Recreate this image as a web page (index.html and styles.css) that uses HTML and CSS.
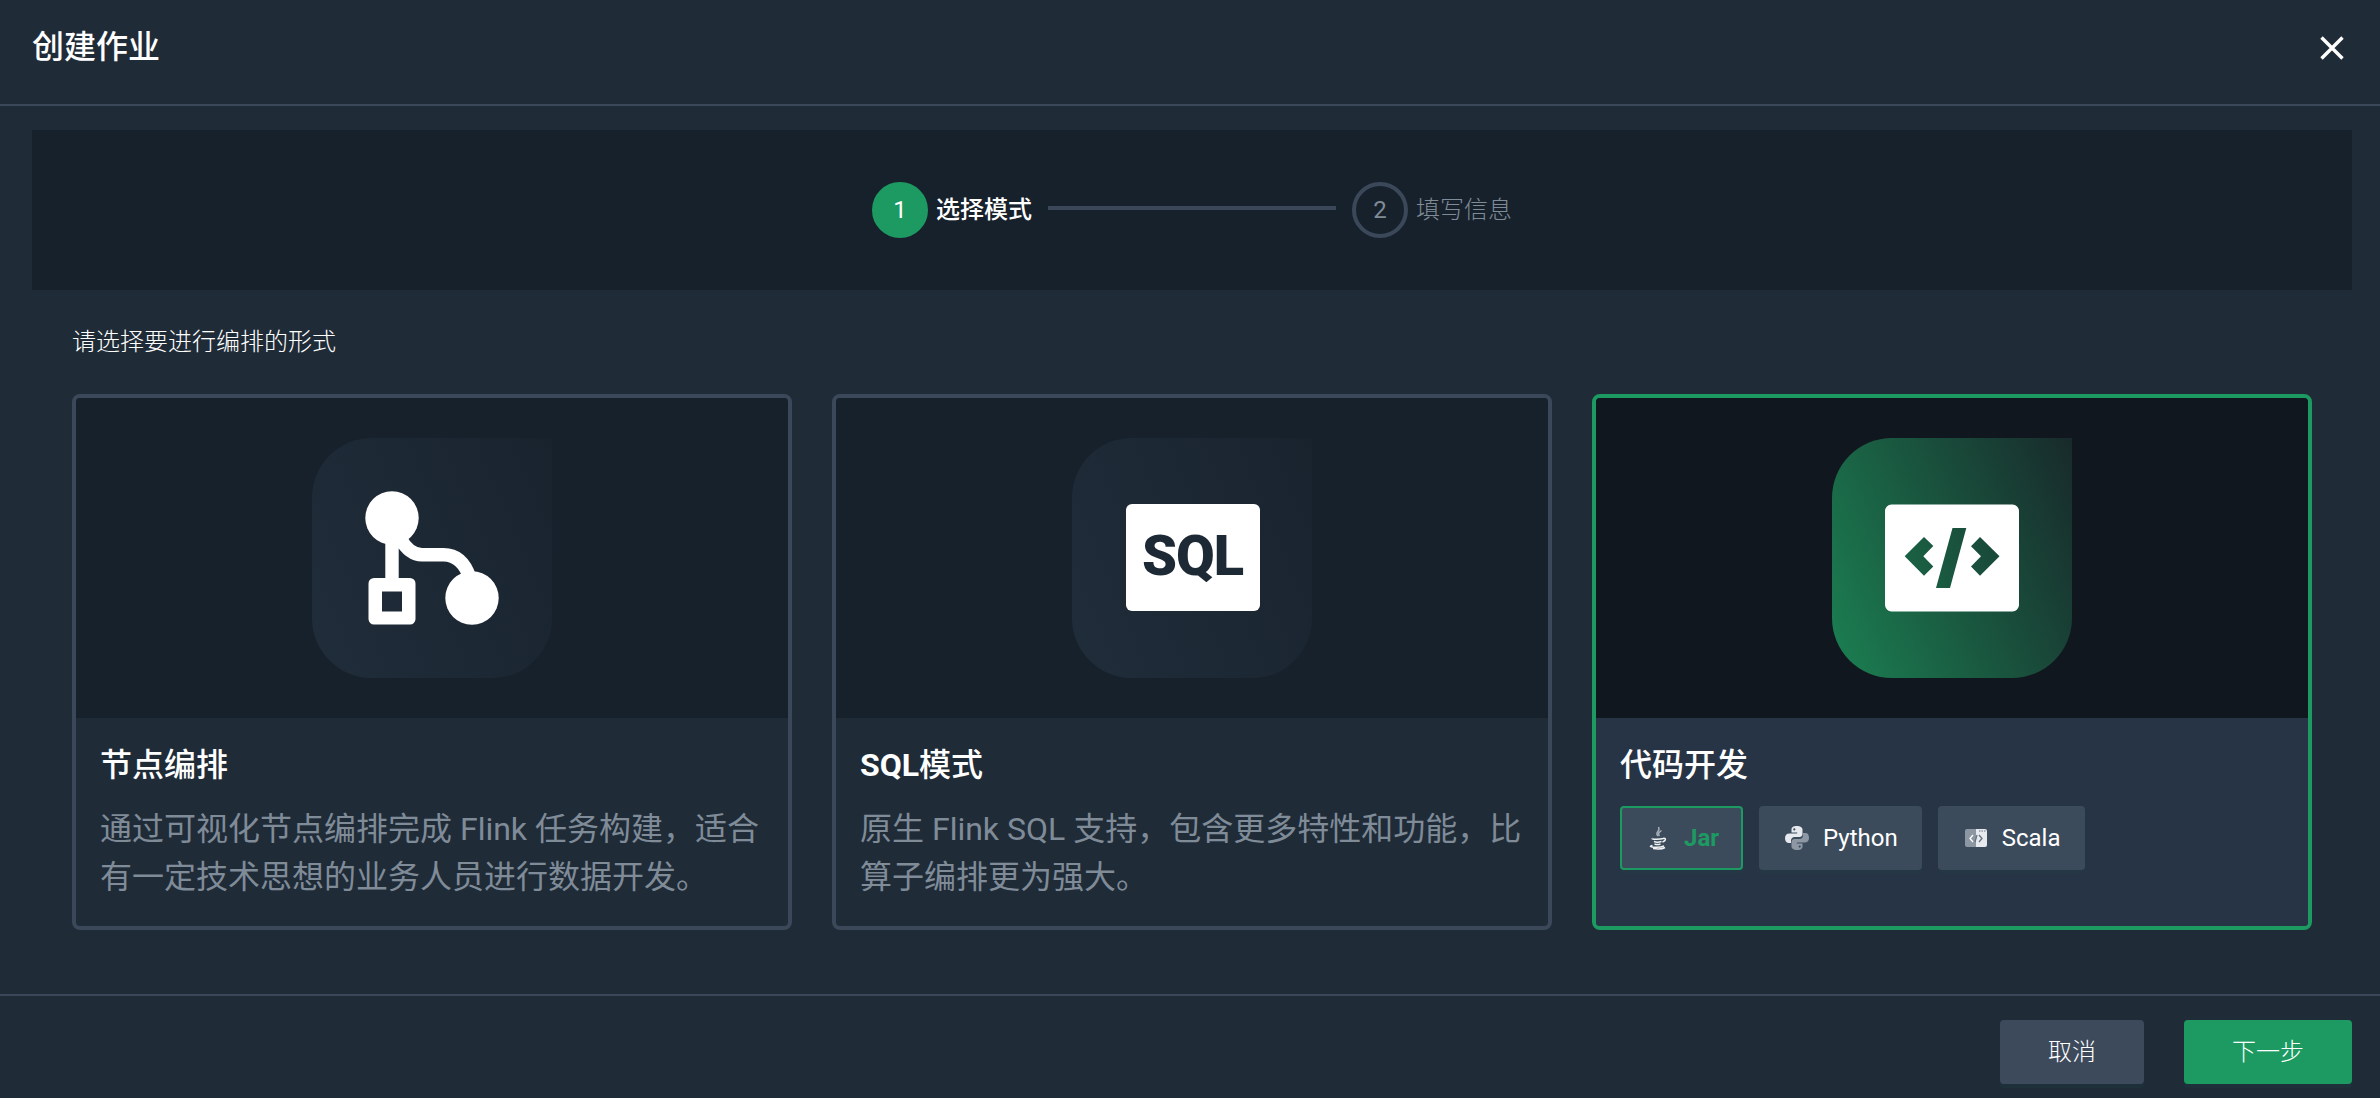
FILE: index.html
```html
<!DOCTYPE html>
<html lang="zh-CN">
<head>
<meta charset="utf-8">
<title>创建作业</title>
<link rel="stylesheet" href="styles.css">
</head>
<body>
<div class="modal">
  <header class="modal-header">
    <h1>创建作业</h1>
    <button class="close" aria-label="关闭"><svg width="24" height="24" viewBox="0 0 24 24"><path d="M1.500 1.500l21 21M22.500 1.500l-21 21" stroke="#fff" stroke-width="3.400" fill="none"/></svg></button>
  </header>
  <main class="modal-body">
    <div class="steps">
      <div class="step active"><span class="num">1</span><span>选择模式</span></div>
      <i class="line"></i>
      <div class="step"><span class="num">2</span><span class="light">填写信息</span></div>
    </div>
    <p class="prompt light">请选择要进行编排的形式</p>
    <div class="cards">
      <section class="card">
        <div class="preview"><div class="tile">
          <svg width="240" height="240" viewBox="0 0 240 240" fill="#fff">
            <circle cx="80" cy="80" r="26.700"/><circle cx="160" cy="160" r="26.700"/>
            <path fill-rule="evenodd" d="M62 140h36a5.500 5.500 0 0 1 5.500 5.500v35.500a5.500 5.500 0 0 1-5.500 5.500h-36a5.500 5.500 0 0 1-5.500-5.500v-35.500a5.500 5.500 0 0 1 5.500-5.500zM70 153.500v20h20v-20z"/>
            <path d="M80 95v50M88 100C94 111 101 116.700 110 116.700H131.500C144 116.700 153 125 158 140" fill="none" stroke="#fff" stroke-width="13.400"/>
          </svg>
        </div></div>
        <div class="info">
          <h2>节点编排</h2>
          <p>通过可视化节点编排完成 Flink 任务构建，适合有一定技术思想的业务人员进行数据开发。</p>
        </div>
      </section>
      <section class="card">
        <div class="preview"><div class="tile"><div class="sql">SQL</div></div></div>
        <div class="info">
          <h2><b>SQL</b>模式</h2>
          <p>原生 Flink SQL 支持，包含更多特性和功能，比算子编排更为强大。</p>
        </div>
      </section>
      <section class="card selected">
        <div class="preview"><div class="tile">
          <svg width="240" height="240" viewBox="0 0 240 240" fill="#fff">
            <path fill-rule="evenodd" d="M59.500 66.500h121a6.500 6.500 0 0 1 6.500 6.500v94a6.500 6.500 0 0 1-6.500 6.500h-121a6.500 6.500 0 0 1-6.500-6.500v-94a6.500 6.500 0 0 1 6.500-6.500zM120.500 90L104 150h14L134.300 90zM92 99L72.700 118.300 92 137.700l9.300-9.300L91.300 118.300l10-10.300zM148 99l-9 9.300 10 10-10 10.200 9 9.200 19.500-19.400z"/>
          </svg>
        </div></div>
        <div class="info">
          <h2>代码开发</h2>
          <div class="langs">
            <button class="lang on">
              <svg width="24" height="24" viewBox="0 0 24 24" fill="none" stroke="#f0f2f4" stroke-width="1.500"><path d="M12 10c-4-4 3-4 .5-9M13.500 10c-2-2.500-.5-3.500 2-5.500" stroke="#a4abb5"/><path d="M6.500 12.500c-2 .9 7 1.200 11 0M8 15.500c2 .8 5 .8 7.500 0M8.500 18c2 .8 4 .7 6 0M17 12.500c3-1 3.500 2-.5 3.500M6.500 19.500c-7 1.500 6 3 11.500.5M7 22.500c5 .7 10 .2 12-1"/></svg>
              <span>Jar</span>
            </button>
            <button class="lang">
              <svg width="24" height="24" viewBox="0 0 24 24"><path fill="#e6e9ed" d="M11.900 0C8 0 6.500 1.500 6.500 3.500V6.500h5.700v1H4.500C1.500 7.500 0 9.600 0 12.100c0 2.900 1.200 4.900 3.500 4.900H6v-2.700c0-2 1.700-3.300 3.500-3.300h5c1.500 0 3-1.300 3-2.700V3.500C17.500 1.300 15 0 11.900 0zM9.300 2.300a1.100 1.100 0 1 1 0 2.200 1.100 1.100 0 0 1 0-2.200z"/><path fill="#8e98a5" d="M12.100 24c3.900 0 5.400-1.500 5.400-3.500v-3h-5.700v-1h7.700c3 0 4.500-2.100 4.500-4.600C24 9 22.800 7 20.500 7H18v2.700c0 2-1.700 3.300-3.500 3.300h-5c-1.500 0-3 1.300-3 2.700v4.800C6.500 22.700 9 24 12.100 24zm2.600-2.300a1.100 1.100 0 1 1 0-2.200 1.100 1.100 0 0 1 0 2.200z"/></svg>
              <span>Python</span>
            </button>
            <button class="lang">
              <svg width="24" height="24" viewBox="0 0 24 24"><path fill="#8d97a4" d="M3 3h9v18H3a2 2 0 0 1-2-2V5a2 2 0 0 1 2-2z"/><path fill="#e6e9ed" d="M12 3h9a2 2 0 0 1 2 2v14a2 2 0 0 1-2 2h-9z"/><path d="M9 9l-3 3.500L9 16" fill="none" stroke="#fff" stroke-width="1.300"/><path d="M15 9l3 3.500-3 3.500M13 9l-2 7" fill="none" stroke="#667382" stroke-width="1.300"/><path d="M15 5h1.500M17.500 5h1.500M20 5h1.500" stroke="#667382"/></svg>
              <span>Scala</span>
            </button>
          </div>
        </div>
      </section>
    </div>
  </main>
  <footer class="modal-footer">
    <button class="btn light">取消</button>
    <button class="btn primary light">下一步</button>
  </footer>
</div>
</body>
</html>
```
FILE: styles.css
```css
* { box-sizing: border-box; }
body, h1, h2, p { margin: 0; }
body { background: #1f2c38; }
button { font: inherit; border: 0; padding: 0; color: inherit; }
svg { display: block; }

.modal {
  height: 1098px;
  display: flex;
  flex-direction: column;
  color: #fff;
  font-family: Roboto, "Noto Sans CJK SC", sans-serif;
  font-size: 24px;
  line-height: 40px;
}
.light { font-weight: 300; }
.modal-header {
  height: 106px;
  flex: none;
  display: flex;
  justify-content: space-between;
  align-items: flex-start;
  padding: 24px 36px 0 32px;
  border-bottom: 2px solid #3b4859;
}
.modal-header h1 { font-size: 32px; line-height: 47px; font-weight: 500; }
.close { background: none; margin-top: 12px; }

.modal-body { flex: 1; padding: 24px 28px 0 32px; }
.steps {
  height: 160px;
  display: flex;
  align-items: center;
  justify-content: center;
  background: #17212c;
}
.step { display: flex; align-items: center; gap: 8px; color: #808b98; }
.num {
  width: 56px;
  height: 56px;
  border: 4px solid #3b4859;
  border-radius: 50%;
  text-align: center;
  line-height: 48px;
}
.step.active { color: #fff; font-weight: 500; }
.active .num { background: #1d9a62; border-color: #1d9a62; font-weight: 400; }
.line { width: 288px; height: 4px; margin: 0 16px; background: #3b4859; transform: translateY(-2px); }

.prompt { padding: 32px 40px; }
.cards { display: grid; grid-template-columns: repeat(3, 720px); gap: 40px; padding: 0 40px; }
.card { height: 536px; border: 4px solid #3b4859; border-radius: 8px; overflow: hidden; }
.preview { height: 320px; display: flex; align-items: center; justify-content: center; background: #17212c; }
.tile {
  width: 240px;
  height: 240px;
  display: flex;
  align-items: center;
  justify-content: center;
  border-radius: 60px 0 60px 60px;
  background: linear-gradient(67deg, #202d3a, #18232e);
}
.sql {
  width: 134px;
  height: 107px;
  margin: 0 0 2px 1px;
  border-radius: 6px;
  background: #fff;
  color: #1d2935;
  font-size: 56px;
  line-height: 104px;
  font-weight: 900;
  letter-spacing: -1px;
  text-align: center;
}
.info { height: 208px; padding: 23px 24px 24px; }
.info h2 { font-size: 32px; line-height: 48px; font-weight: 500; }
.info p { margin-top: 16px; font-size: 32px; line-height: 48px; color: #808b98; font-weight: 400; }
.selected { border-color: #1d9a62; }
.selected .preview { background: #10171f; }
.selected .tile { background: linear-gradient(67deg, #1b8052, #182a2b); }
.selected .info { background: #273445; }

.langs { display: flex; gap: 16px; margin-top: 17px; }
.lang {
  height: 64px;
  display: flex;
  align-items: center;
  gap: 14px;
  padding: 0 22px 0 24px;
  border: 2px solid #3c4b5b;
  border-radius: 4px;
  background: #3c4b5b;
  box-shadow: 0 4px 0 rgba(31, 64, 68, .25);
}
.lang.on { border-color: #1d9a62; color: #1d9a62; font-weight: 700; }

.modal-footer {
  height: 104px;
  flex: none;
  display: flex;
  justify-content: flex-end;
  gap: 40px;
  padding: 24px 28px 0;
  border-top: 2px solid #3b4859;
}
.btn { width: 144px; height: 64px; border-radius: 4px; background: #3c4a5b; box-shadow: 0 4px 0 rgba(31, 64, 68, .2); }
.btn.primary { width: 168px; background: #1d9a62; }
```
